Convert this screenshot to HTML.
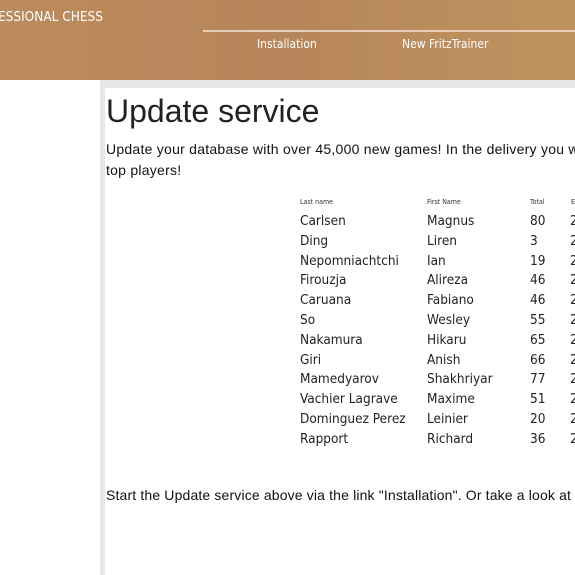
<!DOCTYPE html>
<html><head><style>
body{margin:0;width:575px;height:575px;overflow:hidden;background:#fff;font-family:"Liberation Sans",Arial,sans-serif;position:relative}
.hdr{position:absolute;left:0;top:0;width:575px;height:80px;background:linear-gradient(90deg,#bb8b5e 0%,#b6865a 50%,#c0925f 100%)}
.hdr .brand{position:absolute;left:-2px;top:9px;color:#fff;font-size:13.5px;font-family:"DejaVu Sans Condensed","Liberation Sans",sans-serif}
.hdr .line{position:absolute;left:203px;top:30px;width:372px;height:2px;background:#e6cfb6}
.hdr .nav{position:absolute;top:37px;color:#fff;font-size:12px;font-family:"DejaVu Sans Condensed","Liberation Sans",sans-serif}
.gtop{position:absolute;left:100px;top:80px;width:475px;height:8px;background:#e6e6e6}
.gleft{position:absolute;left:100px;top:80px;width:5px;height:495px;background:#e6e6e6}
h1{position:absolute;left:106px;top:93px;margin:0;font-weight:normal;font-size:32px;color:#222;font-family:"Liberation Sans",sans-serif}
.p{position:absolute;left:106px;font-size:14px;color:#111;white-space:nowrap;letter-spacing:0.25px}
.t{position:absolute;font-family:"DejaVu Sans Condensed","Liberation Sans",sans-serif;color:#222;font-size:13.5px;white-space:nowrap}
.h{font-size:7px;color:#333}
</style></head><body>
<div class="hdr"><div class="brand">ESSIONAL CHESS</div><div class="line"></div>
<div class="nav" style="left:257px">Installation</div><div class="nav" style="left:402px">New FritzTrainer</div></div>
<div class="gtop"></div><div class="gleft"></div>
<h1>Update service</h1>
<div class="p" style="top:141px">Update your database with over 45,000 new games! In the delivery you w</div>
<div class="p" style="top:162px">top players!</div>
<div class="t h" style="left:300px;top:198px">Last name</div>
<div class="t h" style="left:427px;top:198px">First Name</div>
<div class="t h" style="left:530px;top:198px">Total</div>
<div class="t h" style="left:571px;top:198px">E</div>
<div id="rows"></div>
<script>
var d=[["Carlsen","Magnus","80"],["Ding","Liren","3"],["Nepomniachtchi","Ian","19"],["Firouzja","Alireza","46"],["Caruana","Fabiano","46"],["So","Wesley","55"],["Nakamura","Hikaru","65"],["Giri","Anish","66"],["Mamedyarov","Shakhriyar","77"],["Vachier Lagrave","Maxime","51"],["Dominguez Perez","Leinier","20"],["Rapport","Richard","36"]];
var h="";d.forEach(function(r,i){var y=213+i*19.8;h+='<div class="t" style="left:300px;top:'+y+'px">'+r[0]+'</div><div class="t" style="left:427px;top:'+y+'px">'+r[1]+'</div><div class="t" style="left:530px;top:'+y+'px">'+r[2]+'</div><div class="t" style="left:570px;top:'+y+'px">2</div>';});
document.getElementById("rows").innerHTML=h;
</script>
<div class="p" style="top:487px;letter-spacing:0.15px">Start the Update service above via the link "Installation". Or take a look at</div>
</body></html>
